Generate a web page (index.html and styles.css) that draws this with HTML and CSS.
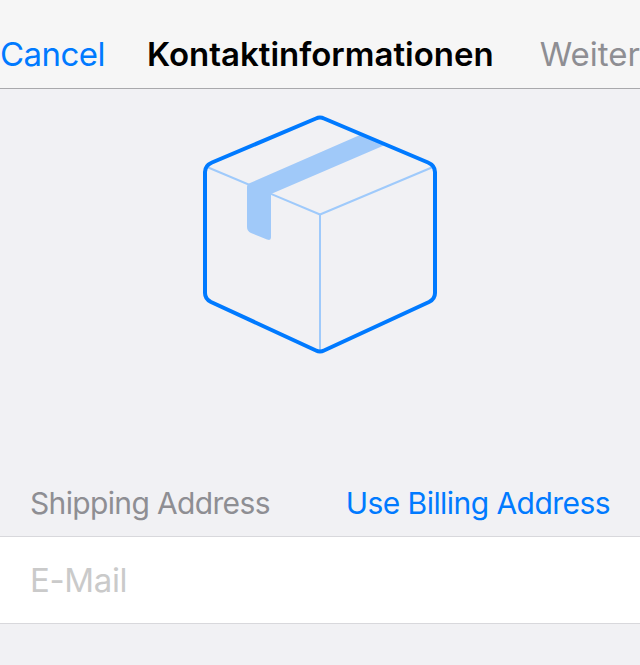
FILE: index.html
```html
<!DOCTYPE html>
<html lang="de">
<head>
<meta charset="utf-8">
<title>Kontaktinformationen</title>
<link rel="stylesheet" href="styles.css">
</head>
<body>
<header class="navbar">
  <a class="cancel">Cancel</a>
  <h1 class="title">Kontaktinformationen</h1>
  <span class="next">Weiter</span>
</header>
<main>
  <div class="hero">
    <svg width="240" height="244" viewBox="200 113 240 244" fill="none" stroke-linejoin="round">
      <path d="M207 167L320 214.500L433 167M320 214.500V351" stroke="#9fcafb" stroke-width="2"/>
      <path d="M360 135L385 145L271 194V237.500Q271 241 267 239.500L251 233Q247 231 247 227V187Q247 184 250 183Z" fill="#a0c9f9"/>
      <path d="M316 118.500Q320 116.500 324 118.500L428 162.500Q435 165.500 435 172V293Q435 299 429 302L324 350.500Q320 352.500 316 350.500L211 302Q205 299 205 293V172Q205 165.500 212 162.500Z" stroke="#007aff" stroke-width="4"/>
    </svg>
  </div>
  <div class="section-header">
    <span class="label">Shipping Address</span>
    <a class="action">Use Billing Address</a>
  </div>
  <div class="row"><span class="placeholder">E-Mail</span></div>
</main>
</body>
</html>
```

FILE: styles.css
```css
body {
  margin: 0;
  height: 665px;
  overflow: hidden;
  background: #f1f1f4;
  font-family: Inter, sans-serif;
  white-space: nowrap;
}
.navbar {
  box-sizing: border-box;
  height: 89px;
  padding-top: 20px;
  display: flex;
  align-items: center;
  background: #f6f6f6;
  border-bottom: 1px solid #a9a9ac;
  font-size: 33px;
}
.cancel, .action { color: #007aff; }
.cancel { width: 147px; letter-spacing: -0.55px; }
.title { margin: 0; font-size: 33px; font-weight: 600; color: #000; }
.next, .label { color: #8e8e93; }
.next { margin-left: auto; }
.hero {
  box-sizing: border-box;
  height: 381px;
  padding-top: 24px;
  display: flex;
  justify-content: center;
  align-items: flex-start;
}
.section-header {
  height: 66px;
  padding: 0 30px;
  display: flex;
  align-items: center;
  justify-content: space-between;
  font-size: 30px;
}
.label { letter-spacing: -0.65px; }
.action { letter-spacing: -0.55px; }
.row {
  box-sizing: border-box;
  height: 88px;
  padding: 0 30px;
  display: flex;
  align-items: center;
  background: #fff;
  border-top: 1px solid #d8d8dc;
  border-bottom: 1px solid #d8d8dc;
  font-size: 33px;
  letter-spacing: -0.35px;
  color: #cacaca;
}
```
